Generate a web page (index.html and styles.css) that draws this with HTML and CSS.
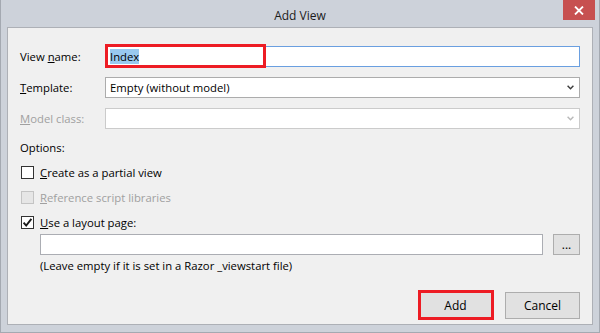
FILE: index.html
```html
<!DOCTYPE html>
<html lang="en">
<head>
  <meta charset="UTF-8">
  <title>Add View</title>
  <link rel="stylesheet" href="styles.css">
</head>
<body>
  <div class="window">
    <div class="titlebar">
      <span class="title">Add View</span>
      <button class="close" aria-label="Close">
        <svg width="10" height="9" viewBox="0 0 10 9"><path d="M1 0.5 L9 8.5 M9 0.5 L1 8.5" stroke="#fff" stroke-width="1.8" fill="none"/></svg>
      </button>
    </div>

    <div class="panel">
      <div class="fields">
        <label class="field-label">View <u>n</u>ame:</label>
        <div class="textbox focused marked"><span class="selected">Index</span></div>

        <label class="field-label"><u>T</u>emplate:</label>
        <div class="combo">
          <span>Empty (without model)</span>
          <svg class="arrow" width="7" height="5" viewBox="0 0 7 5"><path d="M0.6 0.8 L3.5 3.8 L6.4 0.8" stroke="#3c3c3c" stroke-width="1.4" fill="none"/></svg>
        </div>

        <label class="field-label disabled"><u>M</u>odel class:</label>
        <div class="combo disabled">
          <span></span>
          <svg class="arrow" width="7" height="5" viewBox="0 0 7 5"><path d="M0.6 0.8 L3.5 3.8 L6.4 0.8" stroke="#b9b9b9" stroke-width="1.4" fill="none"/></svg>
        </div>
      </div>

      <div class="options-title">Options:</div>
      <div class="options">
        <div class="option"><span class="check"></span><span><u>C</u>reate as a partial view</span></div>
        <div class="option disabled"><span class="check"></span><span><u>R</u>eference script libraries</span></div>
        <div class="option">
          <span class="check">
            <svg width="11" height="11" viewBox="0 0 11 11"><path d="M1.6 5.6 L4.2 8.6 L9.4 1.8" stroke="#1a1a1a" stroke-width="1.9" fill="none"/></svg>
          </span>
          <span><u>U</u>se a layout page:</span>
        </div>
      </div>

      <div class="layout-row">
        <div class="textbox"></div>
        <button class="button small">...</button>
      </div>
      <div class="note">(Leave empty if it is set in a Razor _viewstart file)</div>

      <div class="actions">
        <button class="button marked">Add</button>
        <button class="button">Cancel</button>
      </div>
    </div>
  </div>
</body>
</html>
```

FILE: styles.css
```css
* {
  box-sizing: border-box;
}

body {
  margin: 0;
  font-family: 'Segoe UI', 'Open Sans', sans-serif;
  font-size: 11.3px;
  color: #000;
}

.window {
  width: 600px;
  height: 333px;
  background-color: #cdd2da;
  border: 1px solid #a4a9b1;
  border-top: none;
  display: flex;
  flex-direction: column;
}

.titlebar {
  height: 27px;
  display: grid;
  grid-template-columns: 1fr auto 1fr;
}

.title {
  grid-column: 2;
  font-size: 12px;
  line-height: 24px;
  padding-top: 4px;
  color: #1b1b1b;
}

.close {
  grid-column: 3;
  justify-self: end;
  width: 32px;
  height: 20px;
  margin-right: 4px;
  border: none;
  padding: 0;
  background-color: #c75050;
  display: flex;
  align-items: center;
  justify-content: center;
}

.panel {
  flex: 1;
  margin: 0 6px 7px;
  background-color: #f0f0f0;
  border: 1px solid #adb0b6;
  padding: 18px 12px 5px;
  display: flex;
  flex-direction: column;
}

.fields {
  display: grid;
  grid-template-columns: 85px 1fr;
  grid-auto-rows: 21px;
  row-gap: 10px;
  align-items: center;
}

.field-label.disabled {
  color: #a0a0a0;
}

.textbox,
.combo {
  height: 21px;
  background-color: #fff;
  border: 1px solid #abadb3;
  padding: 0 4px;
  display: flex;
  align-items: center;
}

.textbox.focused {
  border-color: #6a9fe0;
}

.combo {
  justify-content: space-between;
  border-color: #acacac;
  padding-right: 5px;
}

.combo.disabled {
  border-color: #cbcbcb;
}

.selected {
  background-color: #99c9ef;
  line-height: 15px;
}

.marked {
  position: relative;
}

.marked::after {
  content: '';
  position: absolute;
  box-sizing: border-box;
  border: 3px solid #ed1c24;
}

.textbox.marked::after {
  left: -1px;
  top: -3px;
  width: 161px;
  height: 24px;
}

.options-title {
  margin-top: 11px;
  line-height: 16px;
  margin-bottom: 8px;
}

.options {
  display: flex;
  flex-direction: column;
  gap: 9px;
}

.option {
  height: 16px;
  display: flex;
  align-items: center;
}

.option.disabled {
  color: #a0a0a0;
}

.check {
  width: 13px;
  height: 13px;
  margin: 0 6px 0 1px;
  border: 1px solid #333;
  background-color: #fff;
  display: flex;
  align-items: center;
  justify-content: center;
}

.option.disabled .check {
  border-color: #c4c4c4;
  background-color: #e6e6e6;
}

.layout-row {
  margin: 4px 0 0 20px;
  display: flex;
  gap: 10px;
}

.layout-row .textbox {
  flex: 1;
}

.note {
  margin: 3px 0 0 20px;
  line-height: 16px;
}

.button {
  width: 75px;
  height: 27px;
  font-family: inherit;
  font-size: 12px;
  color: #000;
  background-color: #e1e1e1;
  border: 1px solid #adadad;
  padding: 0;
}

.button.small {
  width: 27px;
  height: 21px;
  line-height: 12px;
}

.actions {
  margin-top: auto;
  display: flex;
  justify-content: flex-end;
  gap: 12px;
}

.button.marked::after {
  left: -1px;
  top: -3px;
  right: -2px;
  bottom: -2px;
}
```
